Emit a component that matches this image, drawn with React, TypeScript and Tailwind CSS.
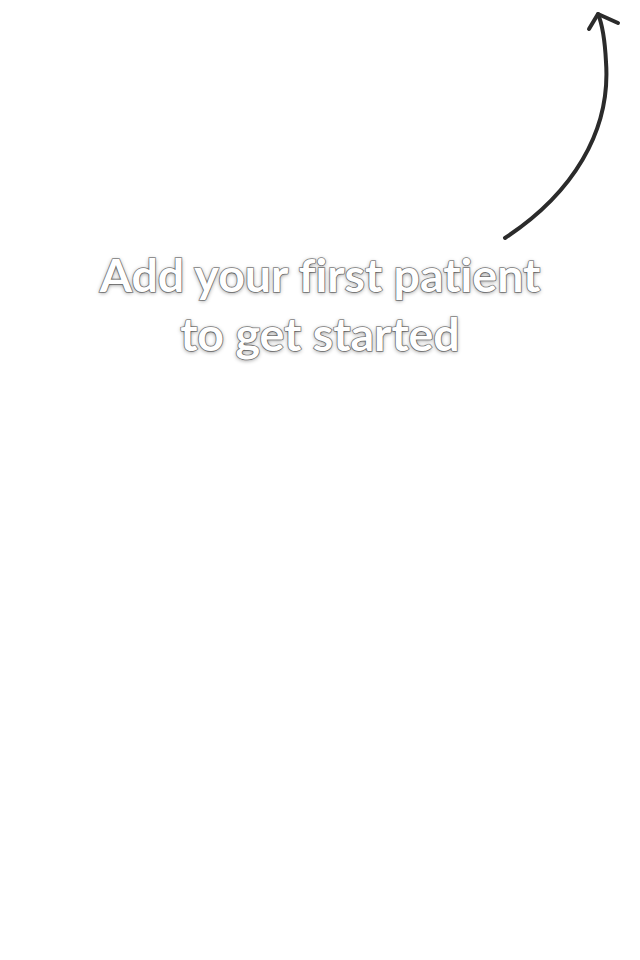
import React from 'react'

const Arrow = () => (
  <svg width="640" height="250" viewBox="0 0 640 250" fill="none" className="absolute left-0 top-0">
    <path
      d="M505 238 C 572 194 611 132 606 62 C 605 42 603 26 598 14"
      stroke="#2b2b2b"
      strokeWidth="4"
      strokeLinecap="round"
    />
    <path
      d="M589 29 L 598 14 L 618 23"
      stroke="#2b2b2b"
      strokeWidth="4"
      strokeLinecap="round"
      strokeLinejoin="round"
    />
  </svg>
)

export default function App() {
  return (
    <div className="relative w-[640px] h-[960px] bg-white overflow-hidden">
      <Arrow />
      <div className="pt-[245px] flex flex-col items-center">
        <h1 className="text-center text-white font-bold text-[46.5px] leading-[59px] font-['Lato',sans-serif] [font-variant-ligatures:none] [-webkit-text-stroke:1.6px_#8c8c8c] [paint-order:stroke_fill] [text-shadow:0_1px_4px_rgba(0,0,0,0.45)]">
          Add your first patient
          <br />
          to get started
        </h1>
      </div>
    </div>
  )
}
